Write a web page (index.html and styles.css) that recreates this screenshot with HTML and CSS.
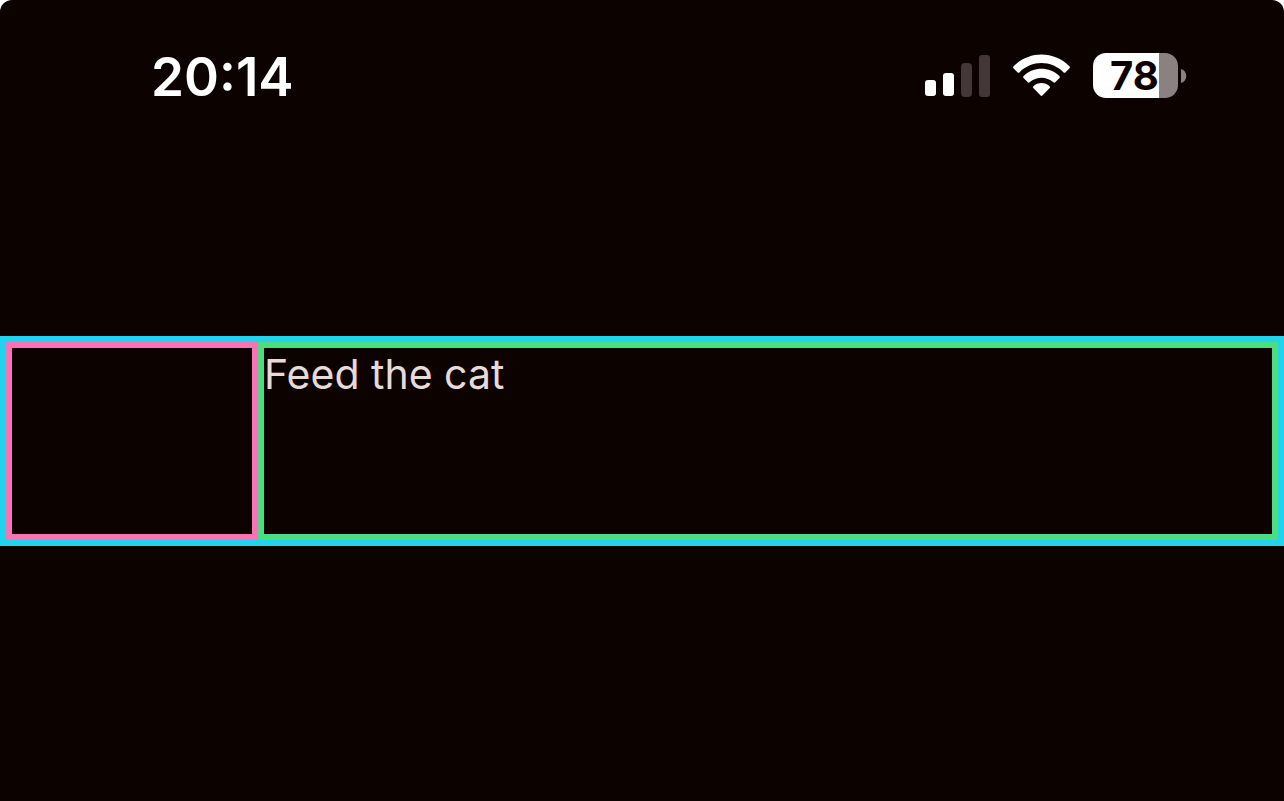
FILE: index.html
```html
<!DOCTYPE html>
<html lang="en">
<head>
<meta charset="utf-8">
<meta name="viewport" content="width=device-width, initial-scale=1">
<title>Feed the cat</title>
<link rel="stylesheet" href="styles.css">
</head>
<body>
<div class="screen">
  <header class="status-bar">
    <time class="clock" datetime="20:14">20:14</time>
    <div class="indicators">
      <svg class="signal" viewBox="0 0 66 44" role="img" aria-label="Signal: 2 of 4 bars">
        <g fill="#fff">
          <rect x="0" y="26" width="11" height="16" rx="3"/>
          <rect x="18" y="19" width="11" height="23" rx="3"/>
        </g>
        <g fill="#433837">
          <rect x="36" y="9" width="11" height="34" rx="4"/>
          <rect x="54" y="1" width="11" height="42" rx="3"/>
        </g>
      </svg>
      <svg class="wifi" viewBox="0 0 58 44" role="img" aria-label="Wi-Fi">
        <g fill="#fff">
          <path d="M0.6 12.3C16 -3.4 41 -3.4 56.4 12.3Q57.4 13.3 56.5 14.2L52.4 18.4Q51.5 19.2 50.6 18.4C38.2 6 18.8 6 6.4 18.4Q5.5 19.2 4.6 18.4L0.5 14.2Q-0.4 13.3 0.6 12.3Z"/>
          <path d="M10.6 22.1C20.8 12.4 36.2 12.4 46.4 22.1Q47.4 23.1 46.5 24L42.2 28.3Q41.3 29.1 40.4 28.3C33.4 22.2 23.6 22.2 16.6 28.3Q15.7 29.1 14.8 28.3L10.5 24Q9.6 23.1 10.6 22.1Z"/>
          <path d="M20.4 32.2C25 28 32 28 36.6 32.2Q37.6 33.2 36.7 34.1L29.4 41.6Q28.5 42.4 27.6 41.6L20.3 34.1Q19.4 33.2 20.4 32.2Z"/>
        </g>
      </svg>
      <div class="battery">
        <span class="battery-level">78</span>
        <svg class="battery-cap" viewBox="0 0 6 14" aria-hidden="true"><path d="M0 0C7 2 7 12 0 14Z" fill="#8a8281"/></svg>
      </div>
    </div>
  </header>
  <main class="row">
    <div class="leading"></div>
    <div class="content">Feed the cat</div>
  </main>
</div>
</body>
</html>
```
FILE: styles.css
```css
* {
  box-sizing: border-box;
}

body {
  margin: 0;
  background: #fff;
  font-family: Inter, "Liberation Sans", sans-serif;
}

.screen {
  min-height: 100vh;
  background: #0c0200;
  border-radius: 12px 12px 0 0;
}

.status-bar {
  display: flex;
  justify-content: space-between;
  align-items: flex-start;
  min-height: 336px;
  padding: 53px 97px 0 151px;
}

.clock {
  color: #fff;
  font-size: 53px;
  font-weight: 600;
  line-height: 48px;
}

.indicators {
  display: flex;
  align-items: center;
  gap: 22px;
}

.signal {
  width: 66px;
  height: 44px;
}

.wifi {
  width: 58px;
  height: 44px;
}

.battery {
  display: flex;
  align-items: center;
  gap: 3px;
}

.battery-level {
  width: 85px;
  height: 45px;
  padding-left: 17px;
  border-radius: 13px;
  background: linear-gradient(to right, #fff 66px, #8a8281 66px);
  color: #0c0200;
  font-size: 40px;
  font-weight: 700;
  line-height: 45px;
}

.battery-cap {
  width: 6px;
  height: 14px;
}

.row {
  display: flex;
  min-height: 210px;
  border: 6px solid #22d3ee;
}

.leading {
  flex: 0 0 252px;
  border: 6px solid #f972b6;
}

.content {
  flex: 1;
  border: 6px solid #4ade80;
  color: #e7dad8;
  font-size: 41px;
  line-height: 52px;
}
```
